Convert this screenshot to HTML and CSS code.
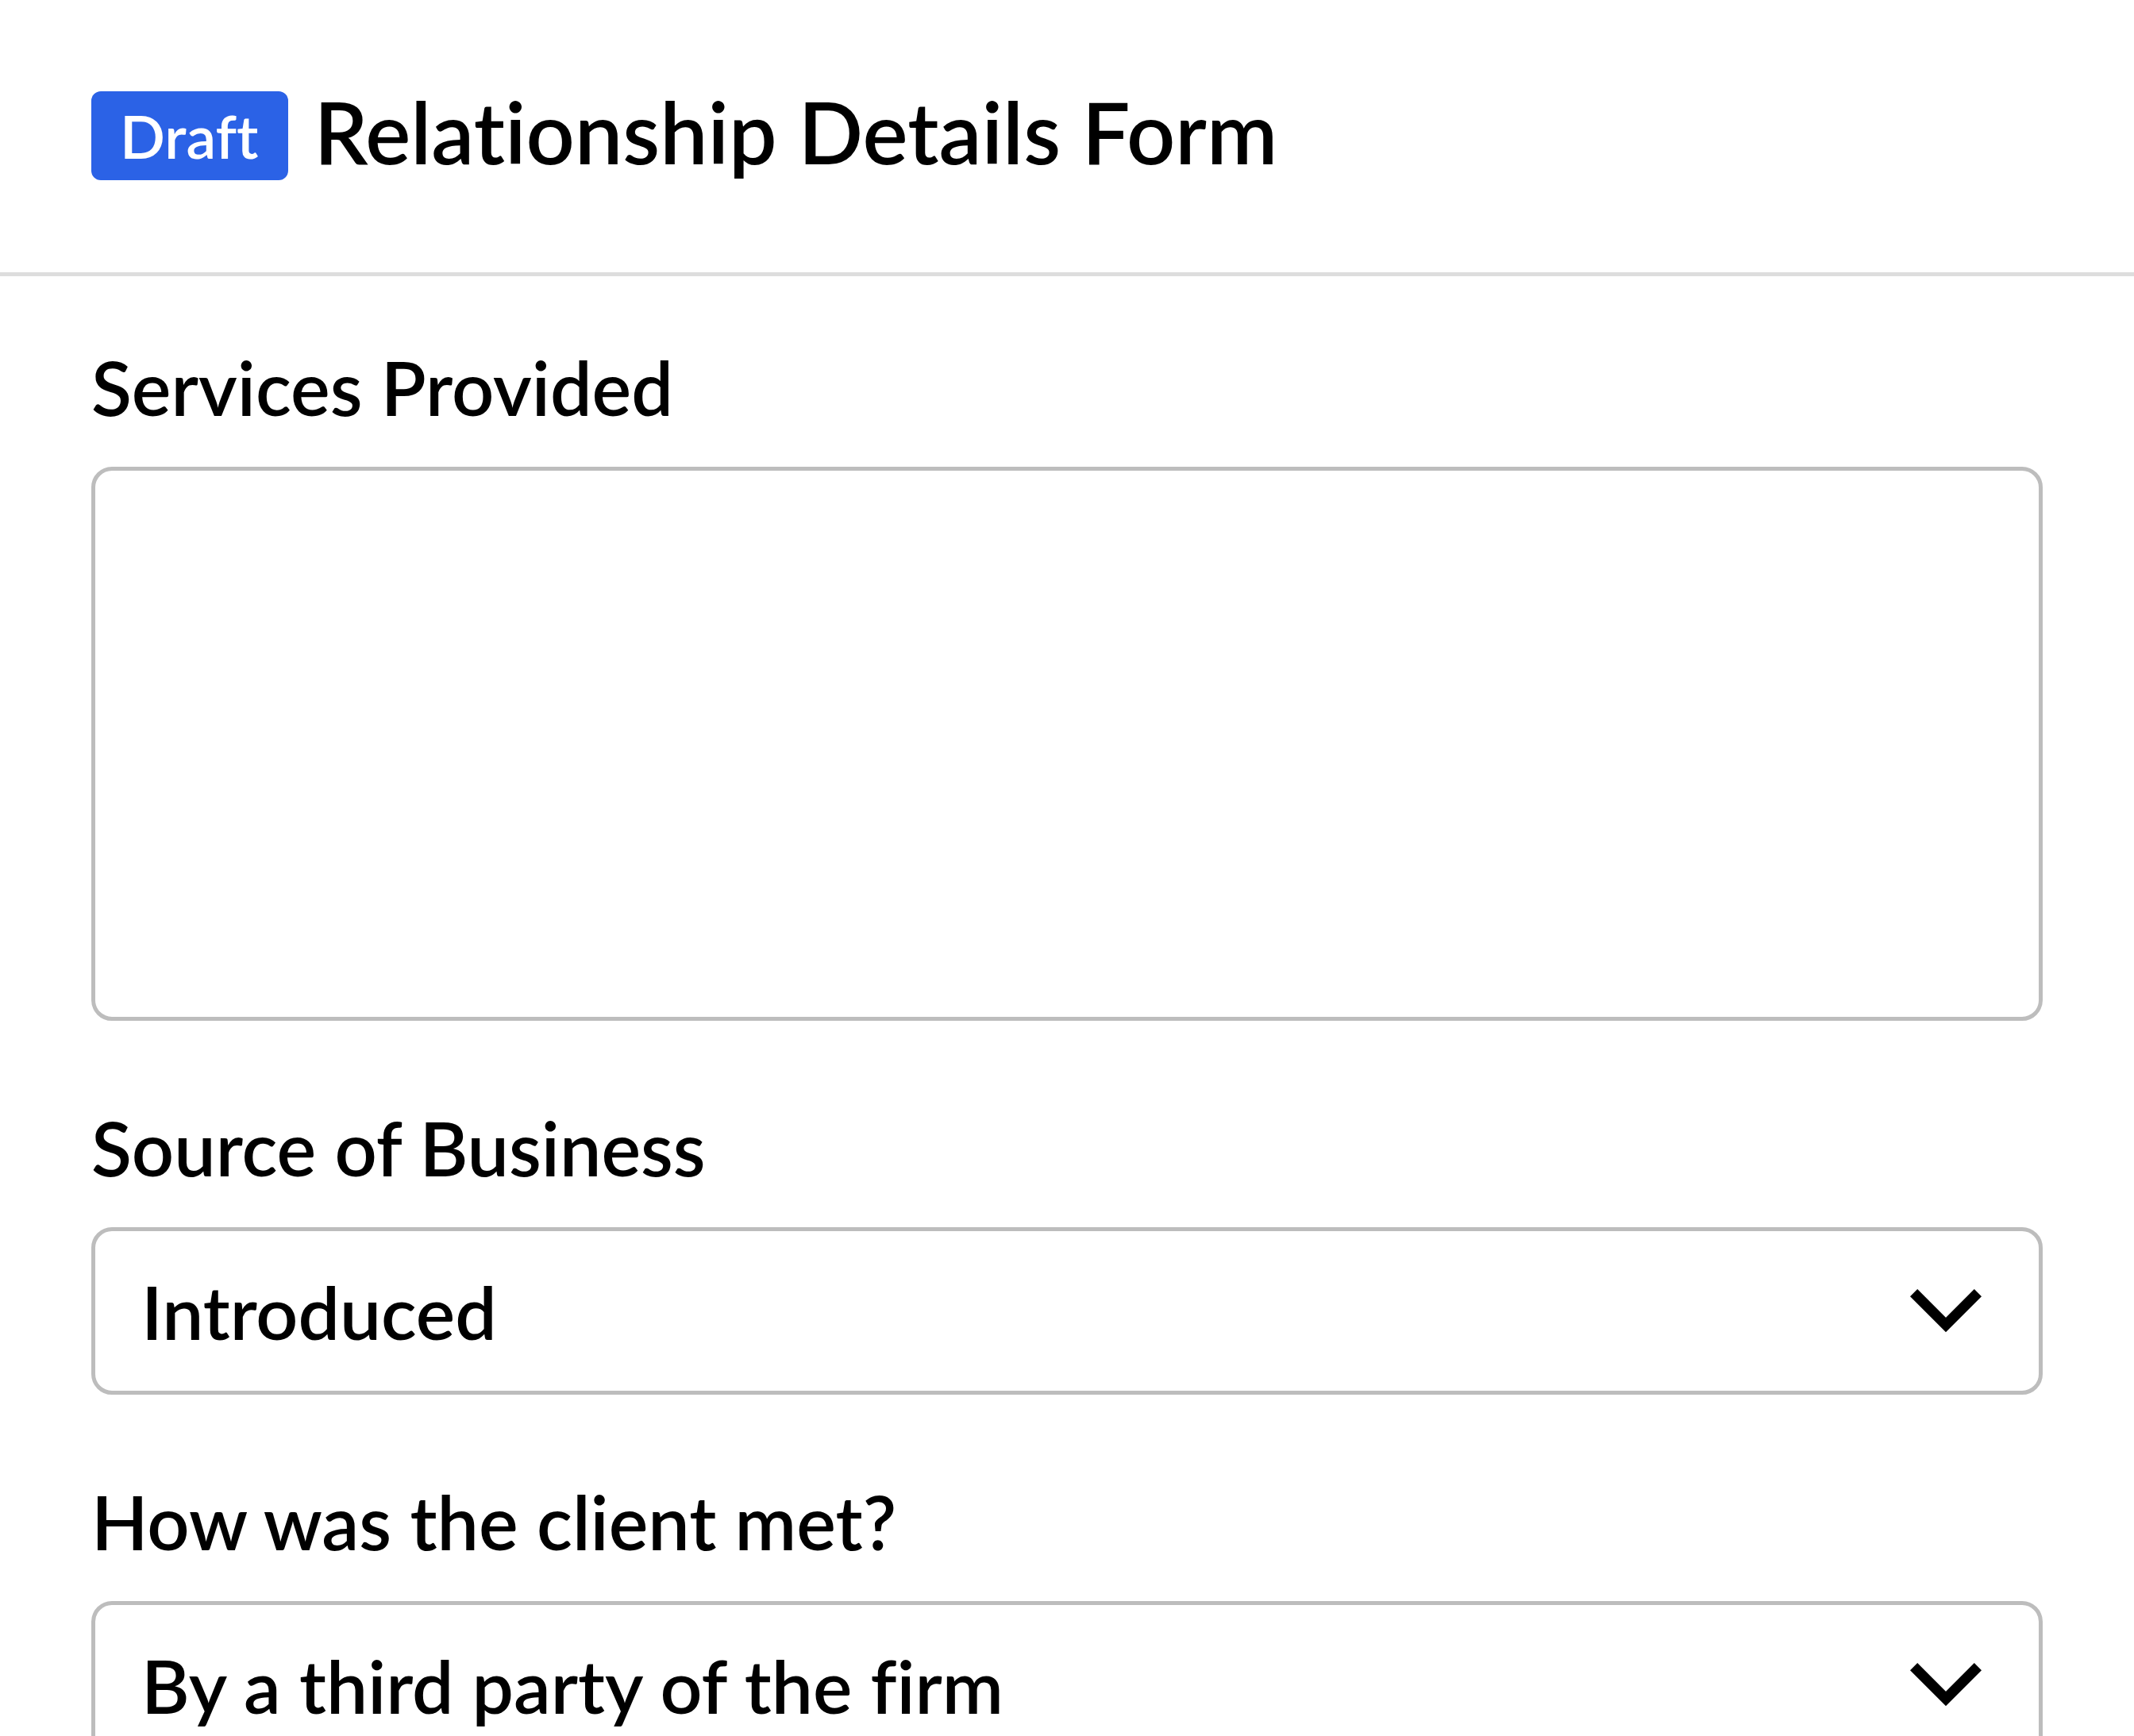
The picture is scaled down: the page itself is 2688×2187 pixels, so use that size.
FILE: index.html
```html
<!DOCTYPE html>
<html lang="en">
<head>
<meta charset="utf-8">
<title>Relationship Details Form</title>
<link rel="stylesheet" href="styles.css">
</head>
<body>
<header class="header">
  <span class="badge">Draft</span>
  <h1 class="title">Relationship Details Form</h1>
</header>
<main class="form">
  <div class="field">
    <label class="label">Services Provided</label>
    <div class="textarea"></div>
  </div>
  <div class="field">
    <label class="label">Source of Business</label>
    <div class="select">
      <span class="select-value">Introduced</span>
      <svg class="chevron" viewBox="0 0 90 56" width="90" height="56"><path d="M4.6 4.6 L45 45 L85.4 4.6" fill="none" stroke="#000" stroke-width="13" stroke-linecap="butt" stroke-linejoin="miter"/></svg>
    </div>
  </div>
  <div class="field">
    <label class="label">How was the client met?</label>
    <div class="select">
      <span class="select-value">By a third party of the firm</span>
      <svg class="chevron" viewBox="0 0 90 56" width="90" height="56"><path d="M4.6 4.6 L45 45 L85.4 4.6" fill="none" stroke="#000" stroke-width="13" stroke-linecap="butt" stroke-linejoin="miter"/></svg>
    </div>
  </div>
</main>
</body>
</html>
```
FILE: styles.css
```css
html, body {
  margin: 0;
  padding: 0;
  background: #ffffff;
}
body {
  font-family: Lato, "Noto Sans", sans-serif;
  color: #000;
  font-variant-ligatures: none;
}
.header {
  display: flex;
  align-items: flex-start;
  gap: 33px;
  padding: 115px 115px 116px;
  border-bottom: 5px solid #dddddd;
}
.badge {
  display: flex;
  align-items: center;
  height: 112px;
  padding: 0 37px 0 36px;
  box-sizing: border-box;
  background: #2b62e6;
  color: #fff;
  border-radius: 12px;
  font-size: 75px;
  font-weight: 600;
}
.title {
  margin: 0;
  font-size: 107.5px;
  font-weight: 600;
  line-height: 102px;
}
.form {
  padding: 86px 115px 0;
  display: flex;
  flex-direction: column;
  gap: 106px;
}
.field {
  display: flex;
  flex-direction: column;
  gap: 46px;
}
.label {
  font-size: 93.5px;
  font-weight: 600;
  line-height: 108px;
}
.textarea {
  height: 698px;
  box-sizing: border-box;
  border: 5px solid #bdbdbd;
  border-radius: 26px;
}
.select {
  height: 211px;
  box-sizing: border-box;
  border: 5px solid #bdbdbd;
  border-radius: 26px;
  display: flex;
  align-items: center;
  justify-content: space-between;
  padding: 0 72px 0 58px;
}
.select-value {
  font-size: 93px;
  font-weight: 600;
}
.chevron {
  display: block;
  flex: none;
}
```
